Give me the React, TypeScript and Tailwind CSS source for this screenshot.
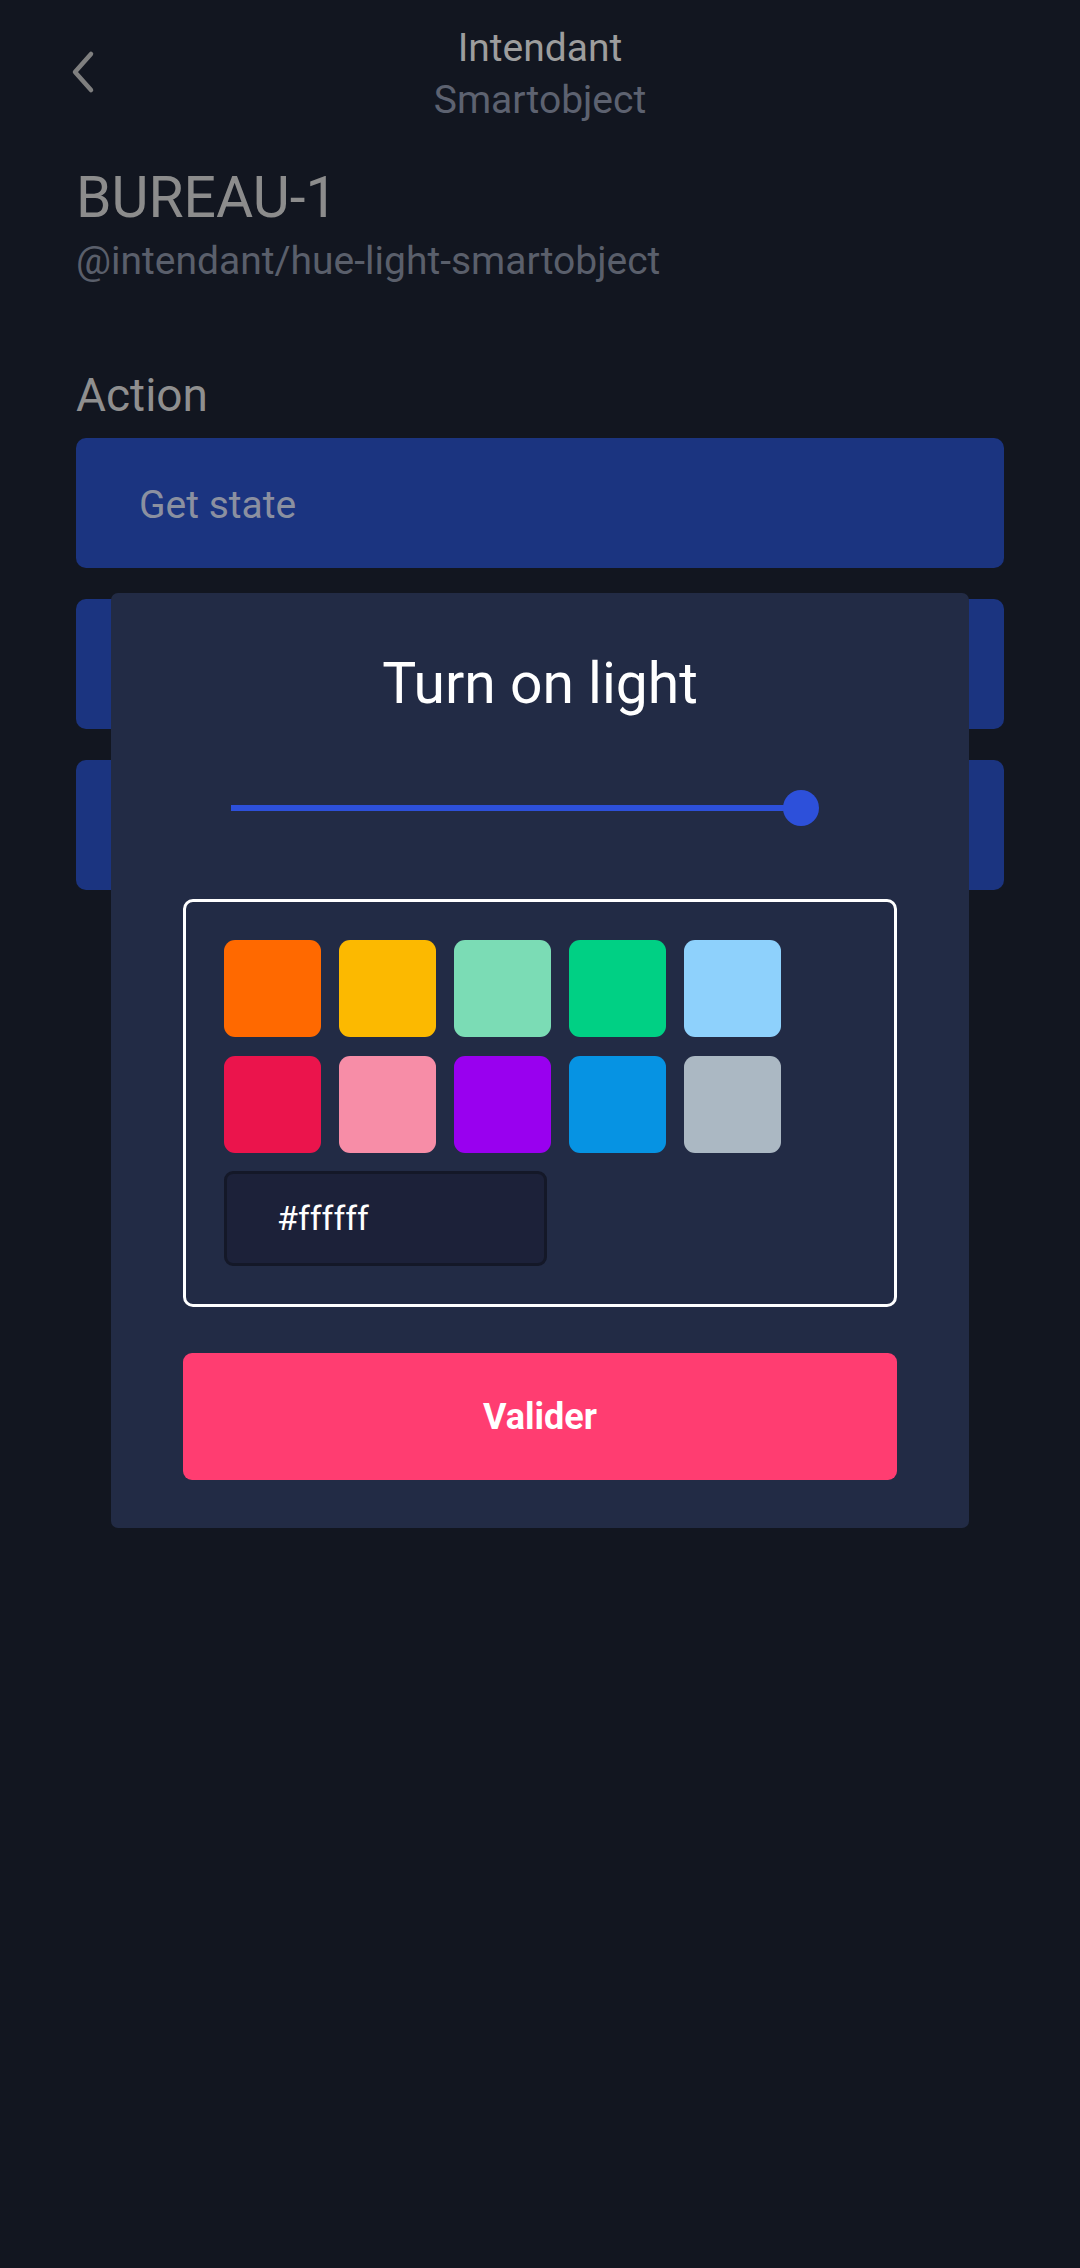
const SWATCHES = [
  '#FF6900',
  '#FCB900',
  '#7BDCB5',
  '#00D084',
  '#8ED1FC',
  '#EB144C',
  '#F78DA7',
  '#9900EF',
  '#0693E3',
  '#ABB8C3'
]

const ACTIONS = ['Get state', 'Turn on light', 'Turn off light']

function ColorPicker() {
  return (
    <div className="mt-[73px] rounded-[10px] border-[3px] border-white p-[38px]">
      <div className="grid grid-cols-[repeat(5,96px)] gap-x-[19px] gap-y-[19px]">
        {SWATCHES.map(color => (
          <div
            key={color}
            className="h-[97px] w-[97px] rounded-[11px]"
            style={{ backgroundColor: color }}
          />
        ))}
      </div>
      <div className="mt-[18px] flex h-[95px] w-[323px] items-center rounded-[9px] border-[3px] border-[#141828] bg-[#1c2139] pl-[50px] text-[34px] text-white">
        #ffffff
      </div>
    </div>
  )
}

export default function App() {
  return (
    <div className="relative min-h-[2268px] w-full bg-[#121620] font-['Roboto','Liberation_Sans',sans-serif]">
      {/* Header */}
      <header className="grid grid-cols-[1fr_auto_1fr] items-start pt-[22px]">
        <div>
          <svg width="40" height="60" viewBox="0 0 40 60" className="ml-[60px] mt-[20px]">
            <path
              d="M31 12 L15 30 L31 48"
              fill="none"
              stroke="#7f7f7f"
              strokeWidth="4.5"
              strokeLinecap="round"
              strokeLinejoin="round"
            />
          </svg>
        </div>
        <div className="text-center text-[39px] leading-[52px]">
          <div className="text-[#9d9d9d]">Intendant</div>
          <div className="text-[#5d6270]">Smartobject</div>
        </div>
        <div />
      </header>

      <main className="px-[76px]">
        <h1 className="mt-[40px] text-[57px] leading-[64px] text-[#8c8c8c]">BUREAU-1</h1>
        <div className="mt-[5px] text-[39px] leading-[52px] text-[#5a5f6b]">
          @intendant/hue-light-smartobject
        </div>

        <h2 className="mt-[82px] text-[46px] leading-[52px] text-[#8f8f8f]">Action</h2>
        <div className="mt-[17px] flex flex-col gap-[31px]">
          {ACTIONS.map(action => (
            <div
              key={action}
              className="flex h-[130px] items-center rounded-[10px] bg-[#1b3480] pl-[63px] pt-[5px] text-[39px] text-[#8b90a0]"
            >
              {action}
            </div>
          ))}
        </div>
      </main>

      {/* Modal */}
      <div className="absolute left-[111px] top-[593px] w-[858px] rounded-[7px] bg-[#222b45] px-[72px] pb-[48px] pt-[59px]">
        <div className="text-center text-[57px] leading-[64px] text-white">Turn on light</div>

        <div className="mt-[74px] flex h-[36px] items-center pl-[48px]">
          <div className="h-[6px] w-[570px] bg-[#2d50da]" />
          <div className="-ml-[18px] h-[36px] w-[36px] rounded-full bg-[#2d50da]" />
        </div>

        <ColorPicker />

        <button className="mt-[46px] flex h-[127px] w-full items-center justify-center rounded-[9px] bg-[#ff3d71] text-[36px] font-bold text-white">
          Valider
        </button>
      </div>
    </div>
  )
}
